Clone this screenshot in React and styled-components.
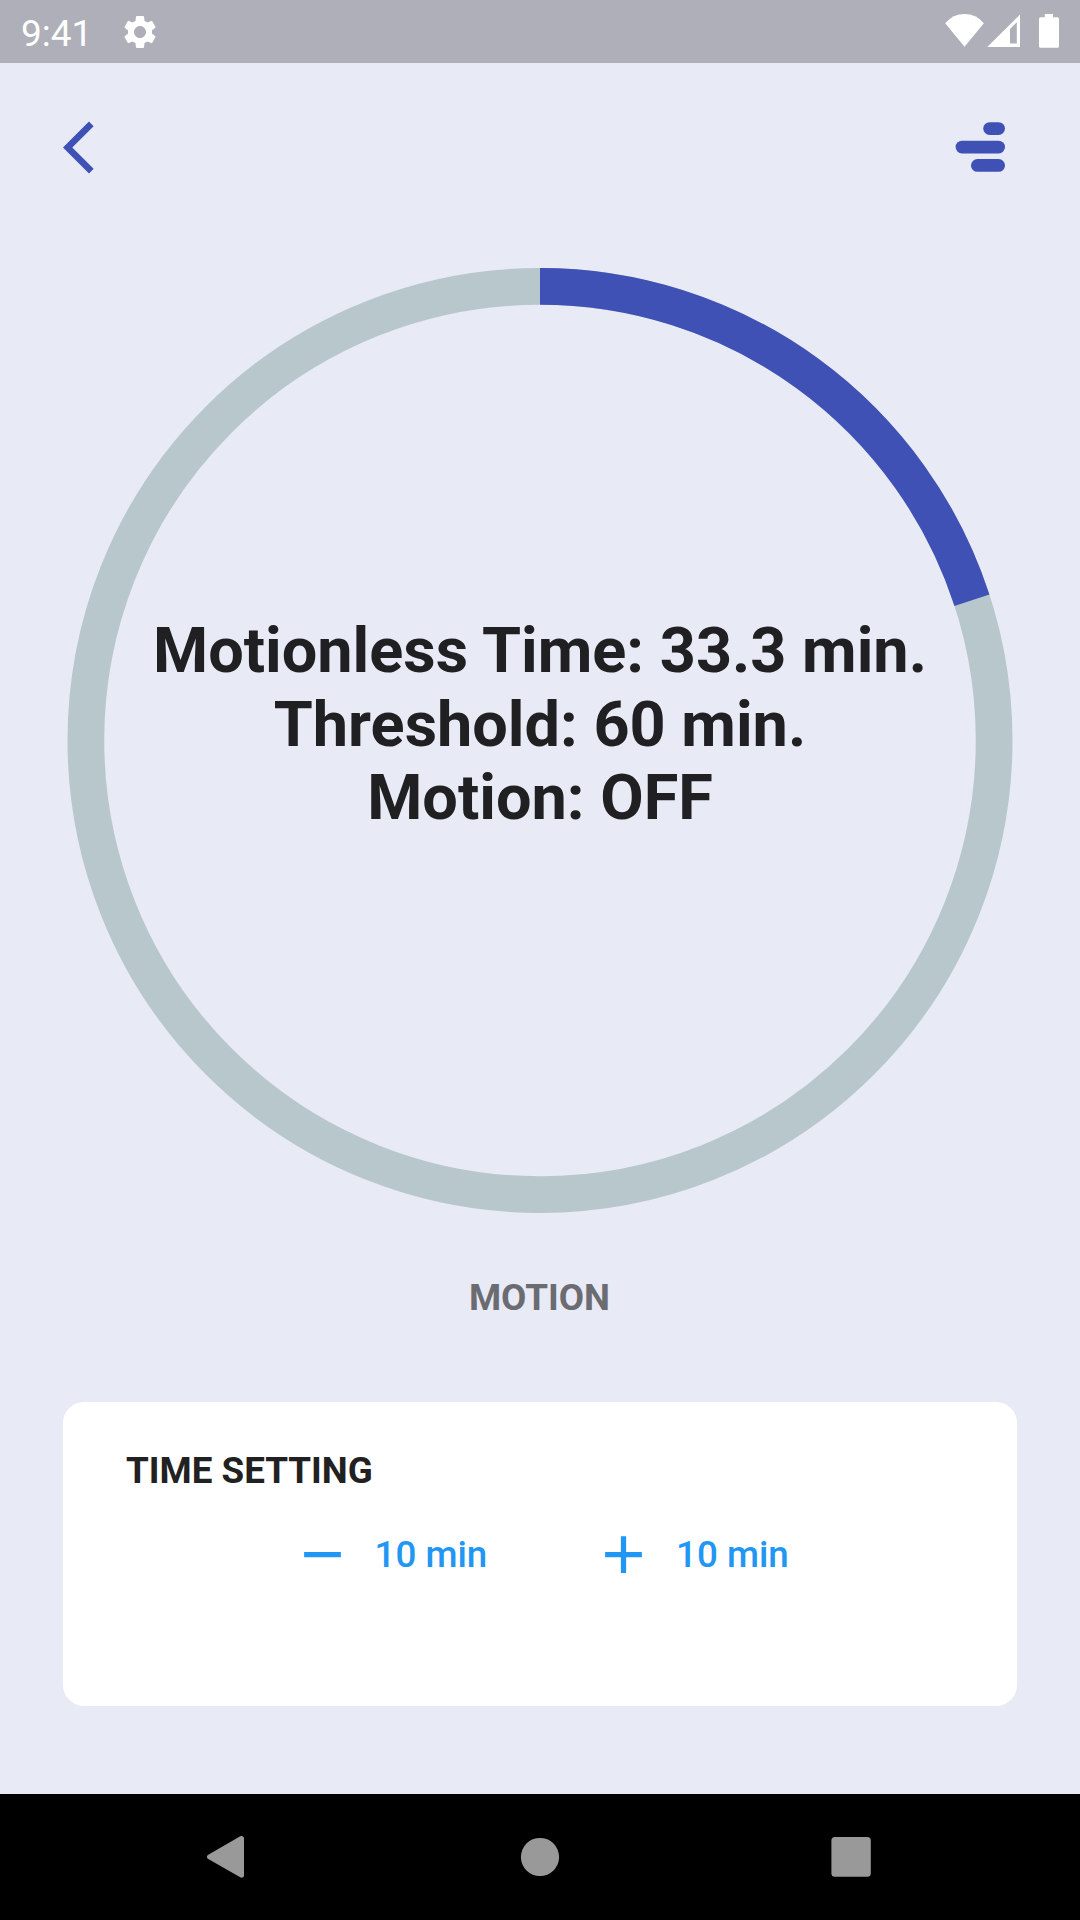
import React from 'react';
import styled, { createGlobalStyle } from 'styled-components';

const GlobalStyle = createGlobalStyle`
  * { box-sizing: border-box; }
  body { margin: 0; background: #e8eaf6; font-family: Roboto, sans-serif; }
`;

const Screen = styled.div`
  display: flex;
  flex-direction: column;
  width: 1080px;
  height: 1920px;
  background: #e8eaf6;
  overflow: hidden;
`;

const StatusBar = styled.header`
  display: flex;
  align-items: center;
  flex: none;
  height: 63px;
  padding: 0 20px 0 21px;
  background: #aeafb8;
  color: #fff;
`;

const Clock = styled.span`
  width: 99px;
  font-size: 37px;
  line-height: 44px;
  padding-top: 4px;
`;

const Glyph = styled.svg`
  display: block;
  flex: none;
  width: ${(p) => p.$w}px;
  height: ${(p) => p.$h ?? p.$w}px;
  fill: currentColor;
`;

const StatusIcons = styled.div`
  display: flex;
  margin-left: auto;
`;

const Toolbar = styled.nav`
  display: flex;
  justify-content: space-between;
  flex: none;
  height: 205px;
  padding: 53px 62px 0 63px;
`;

const IconButton = styled.button`
  display: block;
  width: 63px;
  height: 63px;
  padding: 0;
  border: 0;
  background: none;
  color: #3f51b5;
`;

const Gauge = styled.section`
  display: grid;
  place-items: center;
  flex: none;
  width: 946px;
  height: 945px;
  margin: 0 auto;

  > * { grid-area: 1 / 1; }
`;

const Readout = styled.div`
  color: #202022;
  font-size: 63px;
  font-weight: 700;
  line-height: 73.5px;
  text-align: center;
  white-space: nowrap;
  margin-bottom: 32px;
`;

const Caption = styled.h2`
  flex: none;
  height: 43px;
  margin: 63px 0 83px;
  padding-right: 1px;
  color: #6b6c71;
  font-size: 36.75px;
  font-weight: 700;
  line-height: 43px;
  text-align: center;
`;

const Card = styled.section`
  flex: none;
  height: 304px;
  margin: 0 63px;
  padding: 47px 63px 0;
  border-radius: 21px;
  background: #fff;
`;

const CardTitle = styled.h3`
  margin: 0 0 10px;
  color: #212121;
  font-size: 36.75px;
  font-weight: 700;
  line-height: 43px;
`;

const Actions = styled.div`
  display: flex;
  gap: 104.5px;
  padding-left: 164.5px;
`;

const StepButton = styled.button`
  display: flex;
  align-items: center;
  gap: 21px;
  width: 197px;
  height: 105px;
  padding: 0;
  border: 0;
  background: none;
  color: #2196f3;
  font: 500 36.75px/43px Roboto, sans-serif;
  white-space: nowrap;
`;

const NavBar = styled.footer`
  display: flex;
  align-items: center;
  justify-content: space-between;
  flex: none;
  height: 126px;
  margin-top: auto;
  padding: 0 197px 0 193px;
  background: #000;
  color: #999;
`;

const RADIUS = 454.125;
const LENGTH = 2 * Math.PI * RADIUS;

function Ring({ value }) {
  return (
    <Glyph $w={946} $h={945} viewBox="0 0 946 945">
      <g fill="none" strokeWidth="36.75" transform="rotate(-90 473 472.5)">
        <circle cx="473" cy="472.5" r={RADIUS} stroke="#b8c7cc" />
        <circle
          cx="473"
          cy="472.5"
          r={RADIUS}
          stroke="#3f51b5"
          strokeDasharray={`${LENGTH * value} ${LENGTH}`}
        />
      </g>
    </Glyph>
  );
}

const steps = [
  { name: 'Decrease', path: 'M19 13H5v-2h14v2z' },
  { name: 'Increase', path: 'M19 13h-6v6h-2v-6H5v-2h6V5h2v6h6v2z' },
];

export default function App() {
  return (
    <Screen>
      <GlobalStyle />
      <StatusBar>
        <Clock>9:41</Clock>
        <Glyph $w={40} viewBox="0 0 24 24">
          <path d="M19.14 12.94c.04-.3.06-.61.06-.94 0-.32-.02-.64-.07-.94l2.03-1.58a.49.49 0 0 0 .12-.61l-1.92-3.32a.488.488 0 0 0-.59-.22l-2.39.96c-.5-.38-1.03-.7-1.62-.94l-.36-2.54a.484.484 0 0 0-.48-.41h-3.84c-.24 0-.43.17-.47.41l-.36 2.54c-.59.24-1.13.57-1.62.94l-2.39-.96c-.22-.08-.47 0-.59.22L2.74 8.87c-.12.21-.08.47.12.61l2.03 1.58c-.05.3-.09.63-.09.94s.02.64.07.94l-2.03 1.58a.49.49 0 0 0-.12.61l1.92 3.32c.12.22.37.29.59.22l2.39-.96c.5.38 1.03.7 1.62.94l.36 2.54c.05.24.24.41.48.41h3.84c.24 0 .44-.17.47-.41l.36-2.54c.59-.24 1.13-.56 1.62-.94l2.39.96c.22.08.47 0 .59-.22l1.92-3.32c.12-.22.07-.47-.12-.61l-2.01-1.58zM12 15.6c-1.98 0-3.6-1.62-3.6-3.6s1.62-3.6 3.6-3.6 3.6 1.62 3.6 3.6-1.62 3.6-3.6 3.6z" />
        </Glyph>
        <StatusIcons>
          <Glyph $w={115} $h={63} viewBox="945 0 115 63">
            <path d="M964.5 46.7 945.2 23.2Q953 14 964.5 14t19.4 9.2z" />
            <path
              fillRule="evenodd"
              d="M987.3 47 1020 14.4V47zM1010 29v14.4h6.8V22.2z"
            />
            <path d="M1044.8 14h8.2v3.2h4.4q1.6 0 1.6 1.6v27.4q0 1.6-1.6 1.6h-16.8q-1.6 0-1.6-1.6V18.8q0-1.6 1.6-1.6h4.2z" />
          </Glyph>
        </StatusIcons>
      </StatusBar>

      <Toolbar>
        <IconButton aria-label="Back">
          <Glyph $w={63} viewBox="0 0 24 24">
            <path d="M11.67 3.87 9.9 2.1 0 12l9.9 9.9 1.77-1.77L3.54 12z" />
          </Glyph>
        </IconButton>
        <IconButton aria-label="Menu">
          <Glyph $w={63} viewBox="955 116 63 63">
            <rect x="983.2" y="122.2" width="21.8" height="12.7" rx="6.35" />
            <rect x="955.6" y="140.7" width="49.4" height="12.7" rx="6.35" />
            <rect x="971" y="159.1" width="34" height="12.7" rx="6.35" />
          </Glyph>
        </IconButton>
      </Toolbar>

      <Gauge>
        <Ring value={0.2} />
        <Readout>
          Motionless Time: 33.3 min.
          <br />
          Threshold: 60 min.
          <br />
          Motion: OFF
        </Readout>
      </Gauge>
      <Caption>MOTION</Caption>

      <Card>
        <CardTitle>TIME SETTING</CardTitle>
        <Actions>
          {steps.map((step) => (
            <StepButton key={step.name} aria-label={`${step.name} by 10 min`}>
              <Glyph $w={63} viewBox="0 0 24 24">
                <path d={step.path} />
              </Glyph>
              10 min
            </StepButton>
          ))}
        </Actions>
      </Card>

      <NavBar>
        <Glyph $w={64} viewBox="0 0 64 64">
          <path
            d="M48.5 13.5V50.200L16.500 31.850z"
            stroke="currentColor"
            strokeWidth="5"
            strokeLinejoin="round"
          />
        </Glyph>
        <Glyph $w={64} viewBox="0 0 64 64">
          <circle cx="34" cy="32" r="19.100" />
        </Glyph>
        <Glyph $w={64} viewBox="0 0 64 64">
          <rect x="12.400" y="12.100" width="39.400" height="39.600" rx="3.500" />
        </Glyph>
      </NavBar>
    </Screen>
  );
}
